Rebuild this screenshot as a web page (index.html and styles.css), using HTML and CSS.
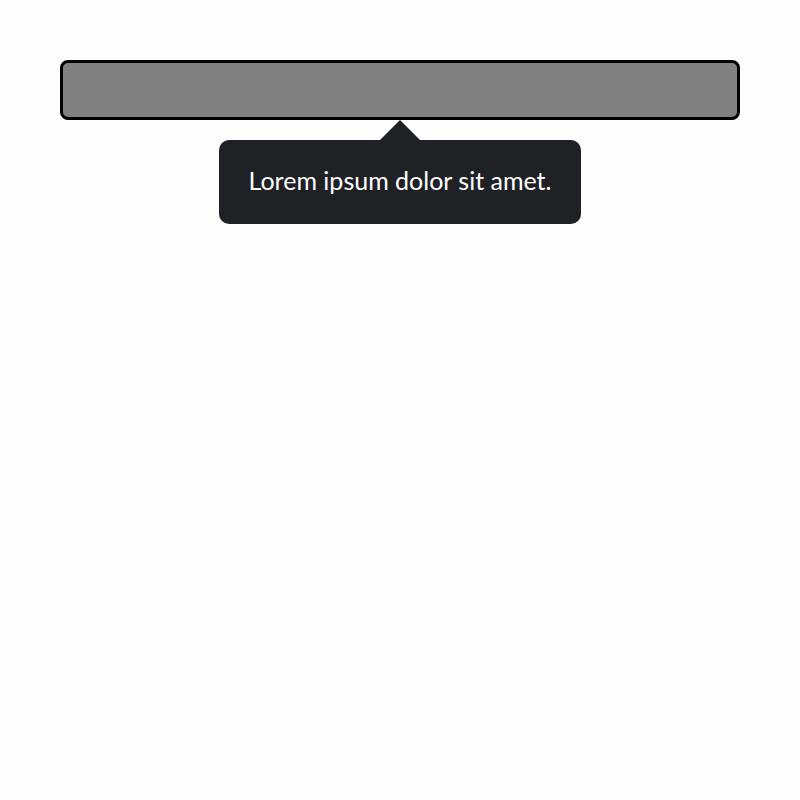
FILE: index.html
```html
<!DOCTYPE html>
<html>
<head>
<meta charset="utf-8">
<link rel="stylesheet" href="styles.css">
</head>
<body>
<div class="page">
  <div class="bar"></div>
  <div class="tooltip-wrap">
    <div class="tooltip">Lorem ipsum dolor sit amet.</div>
  </div>
</div>
</body>
</html>
```
FILE: styles.css
```css
html, body {
  margin: 0;
  padding: 0;
  background: #fefefe;
}
.page {
  padding: 60px;
  display: flex;
  flex-direction: column;
  align-items: stretch;
}
.bar {
  height: 54px;
  background: #808080;
  border: 3px solid #000;
  border-radius: 8px;
}
.tooltip-wrap {
  display: flex;
  justify-content: center;
  margin-top: 20px;
}
.tooltip {
  position: relative;
  background: #202124;
  color: #ffffff;
  font-family: Lato, "Liberation Sans", sans-serif;
  font-size: 25px;
  line-height: 24px;
  padding: 28px 30px 32px;
  border-radius: 10px;
}
.tooltip::before {
  content: "";
  position: absolute;
  top: -20px;
  left: 50%;
  margin-left: -20px;
  border-left: 20px solid transparent;
  border-right: 20px solid transparent;
  border-bottom: 20px solid #202124;
}
```
